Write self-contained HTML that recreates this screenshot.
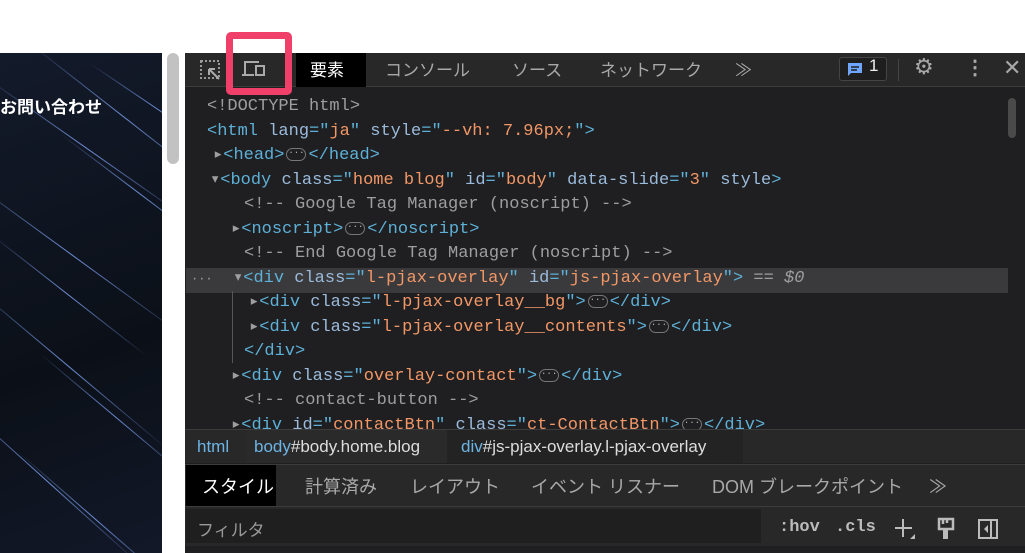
<!DOCTYPE html>
<html style="overflow:hidden"><head><style>
*{margin:0;padding:0;box-sizing:border-box}
body{width:1025px;height:553px;background:#fff;position:relative;overflow:hidden;font-family:"Liberation Sans","Noto Sans CJK JP",sans-serif}
.left{position:absolute;left:0;top:53px;width:162px;height:500px;background:linear-gradient(160deg,#131a2a,#0b1018 60%,#121828);overflow:hidden}
.streak{position:absolute;height:1px;background:linear-gradient(90deg,transparent,#6f8fd8,transparent);transform-origin:0 0}
.contact{position:absolute;left:0;top:93px;color:#fff;font-weight:bold;font-size:17px}
.sb{position:absolute;left:167px;top:53px;width:12px;height:111px;background:#c2c2c2;border-radius:6px}
.dt{position:absolute;left:185px;top:53px;width:840px;height:500px;background:#1f1f21;overflow:hidden}
.tb{position:absolute;left:0;top:0;width:840px;height:34px;background:#282828;border-bottom:1px solid #3c3c3c;color:#a8a8a8;font-size:17px}
.tb span{position:absolute;top:3px}
.code{position:absolute;left:0;top:41px;width:840px;height:335px;overflow:hidden;font-family:"Liberation Mono",monospace;font-size:17px;color:#9aa0a6}
.ln{position:absolute;height:24px;line-height:24px;white-space:pre}
.t{color:#5db0d7}.a{color:#9bbbdc}.v{color:#f29766}.c{color:#9e9e9e}
.dots{display:inline-block;width:20px;height:13px;border:1px solid #777;border-radius:7px;font-size:9px;line-height:9px;text-align:center;color:#bbb;vertical-align:middle;margin:0 2px}
.bc{position:absolute;left:0;top:376px;width:840px;height:34px;background:#282828;border-top:1px solid #3c3c3c;font-size:17px;color:#ddd}
.st{position:absolute;left:0;top:411px;width:840px;height:42px;background:#282828;border-top:1px solid #3c3c3c;font-size:18px;color:#a8a8a8}
.fl{position:absolute;left:0;top:453px;width:840px;height:40px;background:#282828;border-top:1px solid #3c3c3c;font-size:17px;color:#999}
.red{position:absolute;left:226px;top:32px;width:66px;height:63px;border:7px solid #f0406a;border-radius:5px}
</style></head><body>
<div class="left">
<div class="streak" style="left:-20px;top:20px;width:260px;transform:rotate(35deg)"></div>
<div class="streak" style="left:30px;top:-10px;width:240px;transform:rotate(38deg)"></div>
<div class="streak" style="left:-40px;top:120px;width:280px;transform:rotate(36deg)"></div>
<div class="streak" style="left:-30px;top:230px;width:260px;transform:rotate(40deg)"></div>
<div class="streak" style="left:60px;top:80px;width:200px;transform:rotate(37deg)"></div>
<div class="streak" style="left:-50px;top:340px;width:260px;transform:rotate(42deg)"></div>
<div class="streak" style="left:40px;top:300px;width:200px;transform:rotate(40deg)"></div>
<div class="streak" style="left:90px;top:10px;width:160px;transform:rotate(34deg)"></div>
<div class="streak" style="left:-10px;top:180px;width:200px;transform:rotate(38deg)"></div>
<div class="streak" style="left:20px;top:400px;width:200px;transform:rotate(41deg)"></div>
</div>
<div class="contact">お問い合わせ</div>
<div class="sb"></div>
<div class="dt">
<div class="tb">
<svg style="position:absolute;left:14px;top:6px" width="24" height="22"><rect x="2" y="2" width="18" height="17" fill="none" stroke="#999" stroke-width="2" stroke-dasharray="2 2"/><path d="M10 10 L20 20 M10 10 h6 M10 10 v6" stroke="#aaa" stroke-width="2" fill="none"/></svg>
<svg style="position:absolute;left:56px;top:5px" width="26" height="22"><path d="M4 17 V4 H18 M1 17 H13" stroke="#aaa" stroke-width="2" fill="none"/><rect x="15" y="8" width="8" height="9" fill="none" stroke="#aaa" stroke-width="2"/></svg>
<div style="position:absolute;left:111px;top:0;width:70px;height:34px;background:#000"></div>
<span style="left:125px;color:#fff">要素</span>
<span style="left:200px">コンソール</span>
<span style="left:327px">ソース</span>
<span style="left:415px">ネットワーク</span>
<span style="left:550px">≫</span>
<div style="position:absolute;left:654px;top:4px;width:48px;height:24px;border:1px solid #444;border-radius:3px;background:#1e1e1e"></div>
<svg style="position:absolute;left:662px;top:9px" width="16" height="16"><path d="M1 1 H15 V11 H4 L1 14 Z" fill="#6fa4ff"/><path d="M4 5 H12 M4 8 H10" stroke="#1e1e1e" stroke-width="1.5"/></svg>
<span style="left:684px;color:#eee">1</span>
<div style="position:absolute;left:713px;top:6px;width:1px;height:22px;background:#444"></div>
<span style="left:729px;font-size:22px;top:1px">⚙</span>
<span style="left:780px;font-size:20px;top:2px;font-weight:bold">⋮</span>
<span style="left:818px;font-size:22px;top:2px">✕</span>
</div>
<div class="code">
<div style="position:absolute;left:1px;top:174px;width:822px;height:25px;background:#3a3a3c"></div>
<div style="position:absolute;left:823px;top:4px;width:8px;height:40px;background:#4a4a4a;border-radius:4px"></div>
<div style="position:absolute;left:47px;top:197px;width:1px;height:72px;background:#555"></div>
<div class="ln c" style="left:22px;top:1px">&lt;!DOCTYPE html&gt;</div>
<div class="ln" style="left:22px;top:26px"><span class="t">&lt;html</span> <span class="a">lang</span><span class="t">="</span><span class="v">ja</span><span class="t">"</span> <span class="a">style</span><span class="t">="</span><span class="v">--vh: 7.96px;</span><span class="t">"&gt;</span></div>
<div class="ln" style="left:28px;top:50px"><span class="c">▸</span><span class="t">&lt;head&gt;</span><span class="dots">···</span><span class="t">&lt;/head&gt;</span></div>
<div class="ln" style="left:25px;top:75px"><span class="c">▾</span><span class="t">&lt;body</span> <span class="a">class</span><span class="t">="</span><span class="v">home blog</span><span class="t">"</span> <span class="a">id</span><span class="t">="</span><span class="v">body</span><span class="t">"</span> <span class="a">data-slide</span><span class="t">="</span><span class="v">3</span><span class="t">"</span> <span class="a">style</span><span class="t">&gt;</span></div>
<div class="ln c" style="left:59px;top:99px">&lt;!-- Google Tag Manager (noscript) --&gt;</div>
<div class="ln" style="left:46px;top:124px"><span class="c">▸</span><span class="t">&lt;noscript&gt;</span><span class="dots">···</span><span class="t">&lt;/noscript&gt;</span></div>
<div class="ln c" style="left:59px;top:148px">&lt;!-- End Google Tag Manager (noscript) --&gt;</div>
<div class="ln" style="left:6px;top:173px"><span class="c" style="font-size:12px">···</span>  <span class="c">▾</span><span class="t">&lt;div</span> <span class="a">class</span><span class="t">="</span><span class="v">l-pjax-overlay</span><span class="t">"</span> <span class="a">id</span><span class="t">="</span><span class="v">js-pjax-overlay</span><span class="t">"&gt;</span> <span class="c">== <i>$0</i></span></div>
<div class="ln" style="left:64px;top:197px"><span class="c">▸</span><span class="t">&lt;div</span> <span class="a">class</span><span class="t">="</span><span class="v">l-pjax-overlay__bg</span><span class="t">"&gt;</span><span class="dots">···</span><span class="t">&lt;/div&gt;</span></div>
<div class="ln" style="left:64px;top:222px"><span class="c">▸</span><span class="t">&lt;div</span> <span class="a">class</span><span class="t">="</span><span class="v">l-pjax-overlay__contents</span><span class="t">"&gt;</span><span class="dots">···</span><span class="t">&lt;/div&gt;</span></div>
<div class="ln t" style="left:59px;top:246px">&lt;/div&gt;</div>
<div class="ln" style="left:46px;top:271px"><span class="c">▸</span><span class="t">&lt;div</span> <span class="a">class</span><span class="t">="</span><span class="v">overlay-contact</span><span class="t">"&gt;</span><span class="dots">···</span><span class="t">&lt;/div&gt;</span></div>
<div class="ln c" style="left:59px;top:295px">&lt;!-- contact-button --&gt;</div>
<div class="ln" style="left:46px;top:320px"><span class="c">▸</span><span class="t">&lt;div</span> <span class="a">id</span><span class="t">="</span><span class="v">contactBtn</span><span class="t">"</span> <span class="a">class</span><span class="t">="</span><span class="v">ct-ContactBtn</span><span class="t">"&gt;</span><span class="dots">···</span><span class="t">&lt;/div&gt;</span></div>
</div>
<div class="bc">
<div style="position:absolute;left:62px;top:0;width:200px;height:33px;background:#2a2a2a"></div>
<div style="position:absolute;left:262px;top:0;width:296px;height:33px;background:#232323"></div>
<span style="position:absolute;left:12px;top:7px;color:#6cb4e4">html</span>
<span style="position:absolute;left:69px;top:7px"><span style="color:#6cb4e4">body</span>#body.home.blog</span>
<span style="position:absolute;left:276px;top:7px"><span style="color:#6cb4e4">div</span>#js-pjax-overlay.l-pjax-overlay</span>
</div>
<div class="st">
<div style="position:absolute;left:1px;top:0;width:90px;height:41px;background:#000"></div>
<span style="position:absolute;left:17px;top:8px;color:#fff">スタイル</span>
<span style="position:absolute;left:120px;top:8px">計算済み</span>
<span style="position:absolute;left:225px;top:8px">レイアウト</span>
<span style="position:absolute;left:346px;top:8px">イベント リスナー</span>
<span style="position:absolute;left:527px;top:8px">DOM ブレークポイント</span>
<span style="position:absolute;left:744px;top:8px">≫</span>
</div>
<div class="fl">
<div style="position:absolute;left:1px;top:2px;width:575px;height:34px;background:#1f1f1f"></div>
<span style="position:absolute;left:12px;top:9px">フィルタ</span>
<span style="position:absolute;left:594px;top:11px;font-family:'Liberation Mono',monospace;font-weight:bold;color:#bbb">:hov</span>
<span style="position:absolute;left:650px;top:11px;font-family:'Liberation Mono',monospace;font-weight:bold;color:#bbb">.cls</span>
<svg style="position:absolute;left:708px;top:10px" width="24" height="24"><path d="M10 2 V20 M2 11 H19" stroke="#bbb" stroke-width="2"/><path d="M17 22 L22 22 L22 17 Z" fill="#bbb"/></svg>
<svg style="position:absolute;left:752px;top:10px" width="20" height="24"><path d="M2 2 H16 V12 H2 Z M6 2 V7 M10 2 V6 M8 12 V20" stroke="#bbb" stroke-width="2.5" fill="none"/><rect x="6" y="13" width="5" height="9" fill="#bbb"/></svg>
<svg style="position:absolute;left:792px;top:11px" width="22" height="22"><rect x="2" y="2" width="18" height="18" fill="none" stroke="#bbb" stroke-width="2"/><path d="M14 2 V20" stroke="#bbb" stroke-width="2"/><path d="M11 7 L7 11 L11 15 Z" fill="#bbb"/></svg>
</div>
</div>
<div class="red"></div>
</body></html>
